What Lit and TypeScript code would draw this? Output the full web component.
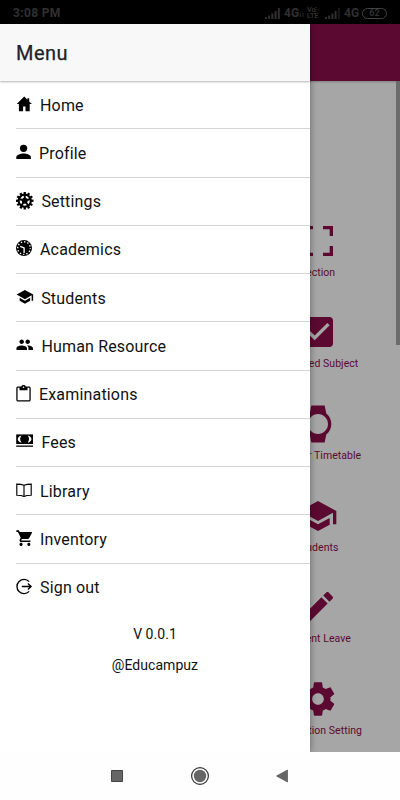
import { LitElement, html, css, svg } from "lit";
import { customElement } from "lit/decorators.js";

const SCHOOL = "M5 13.18v4L12 21l7-3.82v-4L12 17l-7-3.82zM12 3L1 9l11 6 9-4.91V17h2V9L12 3z";

const gear = (teeth: number) =>
  Array.from({ length: teeth }, (_, i) =>
    svg`<rect x="7.6" y="0" width="2.3" height="3" transform="rotate(${(i * 360) / teeth} 8.75 8.75)"/>`);

const menu = [
  { label: "Home", gap: 6, icon: svg`<path d="M8.2 .6L.7 8.100h2.200V15.200h4.200v-4.600h2.400V15.200h4.200V8.100h2.200L13.200 5.500V2.200h-1.800v1.500z"/>` },
  { label: "Profile", gap: 5, icon: svg`<circle cx="7.6" cy="4.3" r="3.6"/><path d="M.3 15.1v-2c0-2.400 4.600-3.700 7.300-3.700s7.300 1.300 7.300 3.700v2z"/>` },
  { label: "Settings", gap: 7.4, icon: svg`${gear(12)}
      <circle cx="8.75" cy="8.75" r="6.1" fill="none" stroke="#000" stroke-width="2.1"/>
      <path d="M8.75 8.75V3M8.75 8.75L3.2 7M8.75 8.75L14.3 7M8.75 8.75L5.4 13.4M8.75 8.75l3.400 4.700" stroke="#000" stroke-width="1.9"/>
      <circle cx="8.75" cy="8.75" r="2.9"/>` },
  { label: "Academics", gap: 6, icon: svg`<circle cx="8" cy="8.100" r="8"/>
      <circle cx="8" cy="8.100" r="6.300" fill="none" stroke="#fff" stroke-width="1.400" stroke-dasharray="1.300 2" stroke-dashoffset=".65"/>
      <path d="M4.200 6.300l3.900 1.600v5.200" fill="none" stroke="#fff" stroke-width="1.300"/>` },
  { label: "Students", gap: 7.2, icon: svg`<path transform="translate(-.1 -1.400) scale(.75 .77)" d=${SCHOOL}/>` },
  { label: "Human Resource", gap: 7.4, icon: svg`<path transform="translate(-.3 -1.300) scale(.75)" d="M16 11c1.660 0 2.990-1.340 2.990-3S17.660 5 16 5s-3 1.340-3 3 1.340 3 3 3zm-8 0c1.660 0 2.990-1.340 2.990-3S9.660 5 8 5 5 6.340 5 8s1.340 3 3 3zm0 2c-2.330 0-7 1.170-7 3.500V19h14v-2.500c0-2.330-4.670-3.500-7-3.500zm8 0c-.290 0-.620.020-.970.050 1.160.840 1.970 1.970 1.970 3.450V19h6v-2.500c0-2.330-4.670-3.500-7-3.500z"/>` },
  { label: "Examinations", gap: 5, icon: svg`<path transform="translate(-2.100 -.900) scale(.8 .77)" d="M19 3h-4.200C14.400 1.800 13.300 1 12 1s-2.400.8-2.800 2H5c-1.100 0-2 .9-2 2v15.500c0 1.100.9 2 2 2h14c1.100 0 2-.9 2-2V5c0-1.100-.9-2-2-2zm-7 0c.550 0 1 .450 1 1s-.450 1-1 1-1-.450-1-1 .450-1 1-1zm7.400 17.900H4.600V4.600H7v3.400h10V4.600h2.400z"/>` },
  { label: "Fees", gap: 7.4, icon: svg`<path d="M.2 1.400h16.800v9.600H.2z"/>
      <path d="M5.500 2.600c-1.800 2.200-1.800 4.900 0 7.100C3.500 9.100 2 8 1.700 6.150 2 4.300 3.500 3.200 5.500 2.600zM11.700 2.600c1.800 2.200 1.800 4.900 0 7.100 2-.6 3.500-1.700 3.800-3.550-.3-1.850-1.800-2.950-3.800-3.550z" fill="#fff"/>
      <path d="M.2 12.500h16.800v1.300H.2z"/>` },
  { label: "Library", gap: 6, icon: svg`<path d="M8 3.300C6 2.400 3.500 2.100.8 2.100v11.100c2.700 0 5.200.2 7.200 1.200 2-1 4.500-1.200 7.200-1.200V2.100c-2.700 0-5.200.3-7.200 1.200zM8 3.300v11" fill="none" stroke="#000" stroke-width="1.150"/>` },
  { label: "Inventory", gap: 6, icon: svg`<path transform="translate(-.4 -1.200) scale(.78)" d="M7 18c-1.100 0-1.990.9-1.990 2S5.900 22 7 22s2-.9 2-2-.9-2-2-2zM1 2v2h2l3.600 7.590-1.350 2.450c-.16.280-.25.610-.25.960 0 1.100.9 2 2 2h12v-2H7.420c-.14 0-.25-.11-.25-.25l.03-.12.9-1.630h7.450c.75 0 1.410-.41 1.750-1.030l3.580-6.490A1 1 0 0 0 20 4H5.210l-.94-2H1zm16 16c-1.100 0-1.990.9-1.990 2s.89 2 1.990 2 2-.9 2-2-.9-2-2-2z"/>` },
  { label: "Sign out", gap: 6, icon: svg`<path d="M13.200 3.600A7.100 7.100 0 1 0 13.200 13.400M5.800 8.500h9.300M11.900 5.400L15.100 8.500l-3.200 3.100" fill="none" stroke="#000" stroke-width="1.350"/>` },
];

const tiles = [
  { label: "Section", d: "M3 3h6v2H5v4H3zM15 3h6v6h-2V5h-4zM3 15h2v4h4v2H3zM19 15h2v6h-6v-2h4z" },
  { label: "Assigned Subject", d: "M19 3H5c-1.110 0-2 .9-2 2v14c0 1.100.890 2 2 2h14c1.110 0 2-.9 2-2V5c0-1.100-.890-2-2-2zm-9 14l-5-5 1.410-1.410L10 14.170l7.590-7.590L19 8l-9 9z" },
  { label: "Teacher Timetable", d: "M20 12c0-2.540-1.190-4.810-3.040-6.270L16 .9H8l-.950 4.830C5.190 7.190 4 9.450 4 12s1.190 4.810 3.050 6.270L8 23.100h8l.960-4.830C18.810 16.810 20 14.540 20 12zM6 12c0-3.310 2.690-6 6-6s6 2.690 6 6-2.690 6-6 6-6-2.690-6-6z" },
  { label: "Students", d: SCHOOL },
  { label: "Student Leave", d: "M3 17.250V21h3.750L17.810 9.940l-3.750-3.750L3 17.250zM20.710 7.040c.390-.390.390-1.020 0-1.410l-2.340-2.340c-.390-.390-1.020-.390-1.410 0l-1.830 1.830 3.750 3.750 1.830-1.830z" },
  { label: "Application Setting", d: "M19.430 12.980c.040-.320.070-.640.070-.980s-.030-.660-.070-.980l2.110-1.650c.190-.150.240-.420.120-.640l-2-3.460c-.120-.220-.390-.300-.610-.220l-2.490 1c-.520-.400-1.080-.730-1.690-.980l-.380-2.650C14.460 2.180 14.250 2 14 2h-4c-.250 0-.460.180-.490.420l-.380 2.650c-.610.250-1.170.590-1.690.980l-2.490-1c-.230-.090-.490 0-.610.220l-2 3.460c-.130.220-.070.490.120.640l2.110 1.650c-.040.320-.070.650-.070.980s.030.660.070.980l-2.110 1.650c-.190.150-.240.420-.120.640l2 3.460c.120.220.390.300.610.220l2.490-1c.520.400 1.080.730 1.690.980l.380 2.650c.030.240.240.420.490.420h4c.250 0 .460-.180.490-.420l.380-2.650c.610-.250 1.170-.590 1.690-.980l2.490 1c.230.090.490 0 .610-.220l2-3.460c.120-.220.070-.490-.120-.640l-2.110-1.650zM12 15.500c-1.930 0-3.500-1.570-3.500-3.500s1.570-3.500 3.500-3.500 3.500 1.570 3.500 3.500-1.570 3.500-3.500 3.500z" },
];

const signal = (last: string) => svg`
  <path d="M0 9h2v2H0zM3.200 7.500h2V11h-2zM6.400 5.500h2V11h-2zM9.600 3h2v8h-2z" fill="#303030"/>
  <path d="M12.800 0h2v11h-2z" fill=${last}/>`;

@customElement("app-root")
export class AppRoot extends LitElement {
  static styles = css`
    :host { display: flex; flex-direction: column; width: 400px; height: 800px; overflow: hidden; background: #fff; font-family: Roboto, sans-serif; color: #000; }
    * { box-sizing: border-box; }
    svg { display: block; flex: none; }
    .status { height: 24px; flex: none; background: #000; color: #303030; display: flex; align-items: center; padding: 2px 13px 0; font-size: 12px; font-weight: 700; }
    .time { flex: 1; letter-spacing: .35px; }
    .net { font-size: 12px; margin-left: 4px; width: 15px; }
    .data { margin: 5px 0 0 1px; }
    .volte { font-size: 7px; line-height: 6.5px; margin: 0 5px 0 3px; width: 13px; }
    .battery { margin-left: 3px; width: 25px; height: 11px; border: 1px solid #444; border-radius: 6px; font-size: 9px; line-height: 9px; text-align: center; }
    .screen { position: relative; height: 728px; flex: none; overflow: hidden; }
    .page { height: 100%; background: #a6a6a6; display: flex; flex-direction: column; }
    .bar { height: 57px; flex: none; background: #5c0931; box-shadow: 0 1px 2px rgba(0,0,0,.25); }
    .body { flex: 1; display: flex; justify-content: flex-end; }
    .tiles { width: 157px; padding-top: 139.5px; }
    .tile { height: 91.7px; display: flex; flex-direction: column; align-items: center; color: #5c0931; font-size: 10.5px; line-height: 14px; letter-spacing: .04px; white-space: nowrap; }
    .tile svg { width: 40px; height: 40px; margin-bottom: 5px; }
    .scroll { width: 4px; height: 264px; background: #6b6b6b; }
    .drawer { position: absolute; left: 0; top: 0; width: 310px; height: 728px; background: #fff; box-shadow: 0 0 7px rgba(0,0,0,.4); }
    .title { height: 57px; background: #f8f8f8; padding: 0 16px; display: flex; align-items: center; font-size: 20px; letter-spacing: .5px; -webkit-text-stroke: .25px #222; color: #222; box-shadow: 0 1px 2px rgba(0,0,0,.3); }
    .list { padding: 0 0 0 16px; }
    .row { height: 48.25px; display: flex; align-items: center; border-bottom: 1px solid #d4d4d4; font-size: 16px; letter-spacing: .17px; color: #111; }
    .row svg { fill: #000; }
    .row:last-child { border-bottom-color: transparent; }
    .row span { padding-top: 1px; }
    .foot { text-align: center; font-size: 14px; line-height: 31px; padding-top: 7.500px; letter-spacing: .05px; color: #111; }
    .nav { flex: 1; display: flex; justify-content: center; align-items: center; gap: 63px; background: #fefefe; }
  `;

  render() {
    return html`
      <div class="status">
        <span class="time">3:08 PM</span>
        <svg width="15" height="11">${signal("#303030")}</svg><span class="net">4G</span>
        <svg class="data" width="4" height="5"><path d="M0 0h1v4H0zM2.500 0h1v4h-1z" fill="#252525"/></svg>
        <span class="volte">Vo⁝<br>LTE</span>
        <svg width="15" height="11">${signal("#191919")}</svg><span class="net">4G</span>
        <span class="battery">62</span>
      </div>
      <div class="screen">
        <div class="page">
          <div class="bar"></div>
          <div class="body">
            <div class="tiles">
              ${tiles.map(t => html`<div class="tile"><svg viewBox="0 0 24 24"><path fill="#5c0931" fill-rule="evenodd" d=${t.d}/></svg>${t.label}</div>`)}
            </div>
            <div class="scroll"></div>
          </div>
        </div>
        <div class="drawer">
          <div class="title">Menu</div>
          <div class="list">
            ${menu.map(m => html`<div class="row"><svg width="18" height="18" viewBox="0 0 18 18">${m.icon}</svg><span style="margin-left:${m.gap}px">${m.label}</span></div>`)}
          </div>
          <div class="foot"><div>V 0.0.1</div><div>@Educampuz</div></div>
        </div>
      </div>
      <div class="nav">
        <svg width="20" height="20"><path d="M4.500 4.500h11v11h-11z" fill="#666" stroke="#444"/></svg>
        <svg width="20" height="20"><circle cx="10" cy="10" r="8.400" fill="none" stroke="#333" stroke-width="1.200"/><circle cx="10" cy="10" r="6.200" fill="#666"/></svg>
        <svg width="20" height="20"><path d="M3.500 10L14.500 4v12z" fill="#666" stroke="#444" stroke-width=".6"/></svg>
      </div>`;
  }
}
